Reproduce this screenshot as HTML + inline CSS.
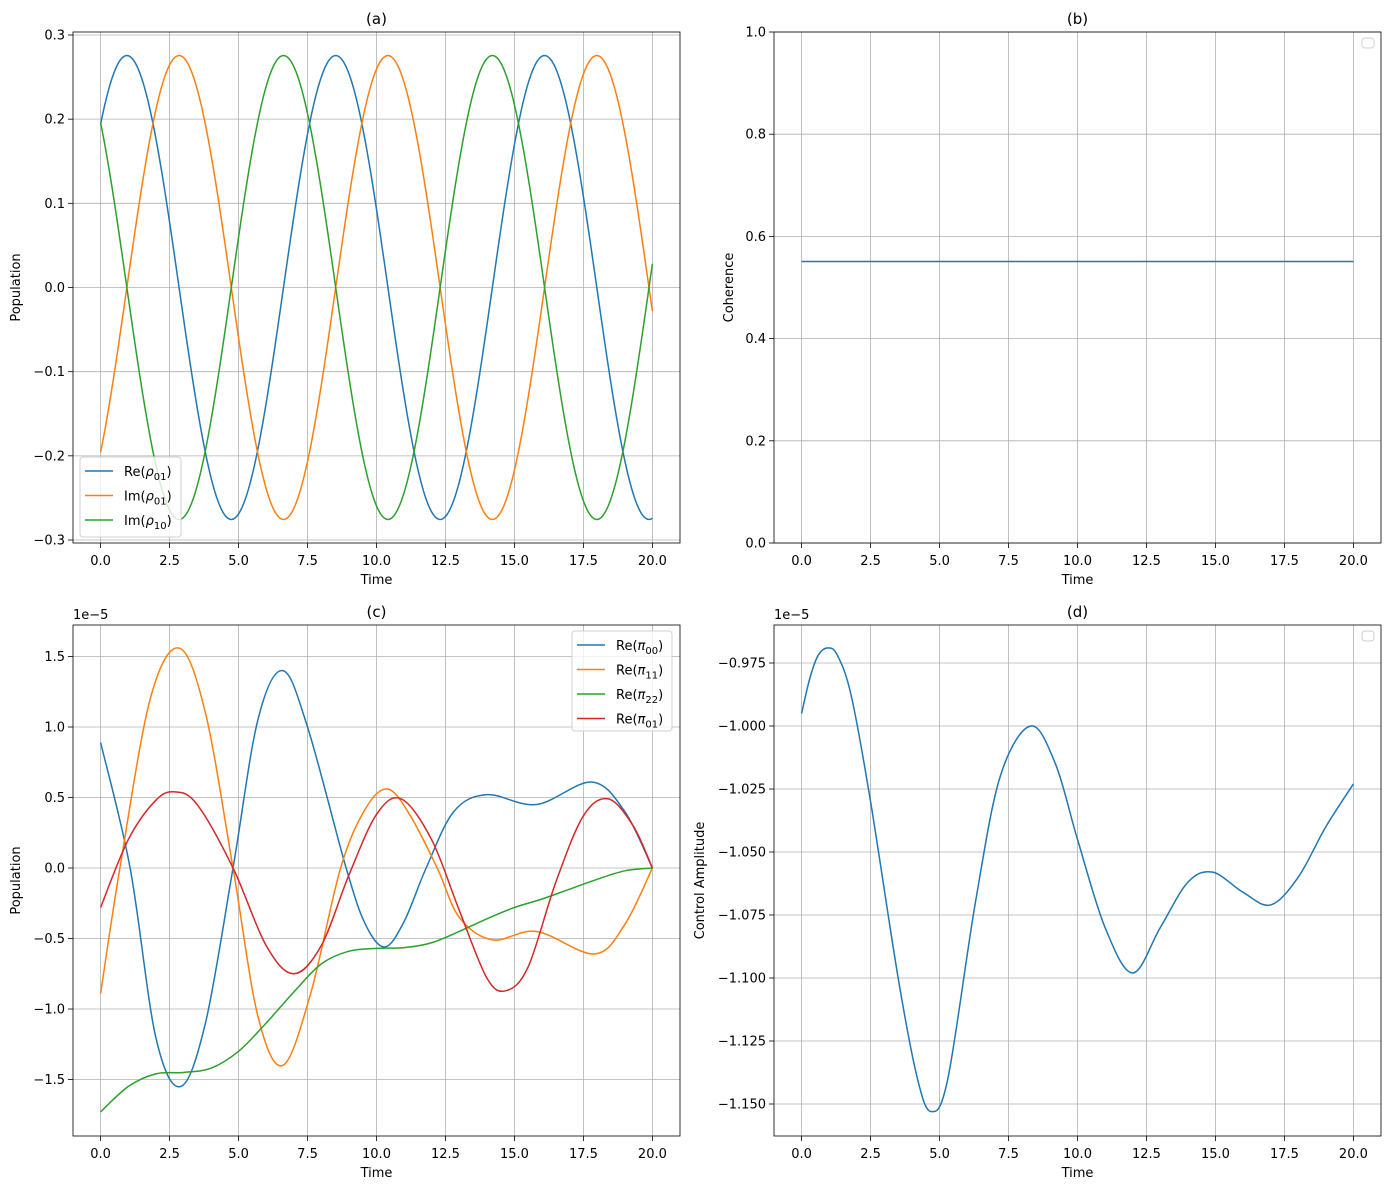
<!DOCTYPE html>
<html><head><meta charset="utf-8">
<style>
body{margin:0;background:#fff;}
svg{display:block;font-family:"DejaVu Sans","Liberation Sans",sans-serif;}
</style></head>
<body>
<svg id="s" width="1389" height="1189" xmlns="http://www.w3.org/2000/svg"></svg>
<script>
const S=document.getElementById('s');
let out='';
const C={b:'#1f77b4',o:'#ff7f0e',g:'#2ca02c',r:'#d62728'};
function crPath(pts,X,Y){
  let p=pts.map(q=>[X(q[0]),Y(q[1])]);
  let d='M'+p[0][0].toFixed(2)+','+p[0][1].toFixed(2);
  for(let i=0;i<p.length-1;i++){
    let p0=p[i-1]||p[i],p1=p[i],p2=p[i+1],p3=p[i+2]||p[i+1];
    let c1=[p1[0]+(p2[0]-p0[0])/6,p1[1]+(p2[1]-p0[1])/6];
    let c2=[p2[0]-(p3[0]-p1[0])/6,p2[1]-(p3[1]-p1[1])/6];
    d+='C'+c1.map(v=>v.toFixed(2)).join(',')+' '+c2.map(v=>v.toFixed(2)).join(',')+' '+p2.map(v=>v.toFixed(2)).join(',');
  }
  return d;
}
function linePath(pts,X,Y){return 'M'+pts.map(q=>X(q[0]).toFixed(2)+','+Y(q[1]).toFixed(2)).join('L');}
function axes(o){
  const X=t=>o.L+(t+1)*(o.R-o.L)/22;
  const Y=o.Y;
  let g='';
  for(let t=0;t<=20;t+=2.5){let x=X(t);g+=`<line x1="${x}" y1="${o.T}" x2="${x}" y2="${o.B}" stroke="#b0b0b0" stroke-width="0.8"/>`;}
  o.yt.forEach(v=>{let y=Y(v[0]);g+=`<line x1="${o.L}" y1="${y}" x2="${o.R}" y2="${y}" stroke="#b0b0b0" stroke-width="0.8"/>`;});
  g+=`<g clip-path="url(#c${o.id})">`;
  o.curves.forEach(c=>{g+=`<path d="${c.lin?linePath(c.p,X,Y):crPath(c.p,X,Y)}" fill="none" stroke="${c.c}" stroke-width="1.5"/>`;});
  g+='</g>';
  out+=`<clipPath id="c${o.id}"><rect x="${o.L}" y="${o.T}" width="${o.R-o.L}" height="${o.B-o.T}"/></clipPath>`;
  g+=`<rect x="${o.L}" y="${o.T}" width="${o.R-o.L}" height="${o.B-o.T}" fill="none" stroke="#000" stroke-width="0.8"/>`;
  for(let t=0;t<=20;t+=2.5){let x=X(t);g+=`<line x1="${x}" y1="${o.B}" x2="${x}" y2="${o.B+5}" stroke="#000" stroke-width="0.8"/><text x="${x}" y="${o.B+22}" font-size="13" text-anchor="middle">${t.toFixed(1)}</text>`;}
  o.yt.forEach(v=>{let y=Y(v[0]);g+=`<line x1="${o.L-5}" y1="${y}" x2="${o.L}" y2="${y}" stroke="#000" stroke-width="0.8"/><text x="${o.L-8}" y="${y+4.5}" font-size="13" text-anchor="end">${v[1]}</text>`;});
  g+=`<text x="${(o.L+o.R)/2}" y="${o.T-8}" font-size="15" text-anchor="middle">${o.title}</text>`;
  g+=`<text x="${(o.L+o.R)/2}" y="${o.B+41}" font-size="13" text-anchor="middle">Time</text>`;
  let yc=(o.T+o.B)/2;
  g+=`<text x="${o.ylx}" y="${yc}" font-size="13" text-anchor="middle" transform="rotate(-90 ${o.ylx} ${yc})">${o.ylabel}</text>`;
  if(o.off)g+=`<text x="${o.L}" y="${o.T-6}" font-size="13">1e−5</text>`;
  if(o.leg){
    let l=o.leg;
    g+=`<rect x="${l.x}" y="${l.y}" width="${l.w}" height="${l.h}" rx="3" fill="#fff" fill-opacity="0.8" stroke="#d0d0d0" stroke-width="1"/>`;
    (l.items||[]).forEach((it,i)=>{let y=l.y+14+i*24.5;
      g+=`<line x1="${l.x+5}" y1="${y}" x2="${l.x+33}" y2="${y}" stroke="${it[0]}" stroke-width="1.5"/><text x="${l.x+44}" y="${y+5}" font-size="13">${it[1]}</text>`;});
  }
  out+=g;
}
const A=0.2756,w=2*Math.PI/7.57,ph=0.79;
let re=[],im=[],im2=[];
for(let i=0;i<=400;i++){let t=i*0.05;re.push([t,A*Math.cos(w*t-ph)]);im.push([t,A*Math.sin(w*t-ph)]);im2.push([t,-A*Math.sin(w*t-ph)]);}
axes({id:'a',L:73,R:680,T:32,B:543,Y:v=>287.5-v*841.7,ylx:20,ylabel:'Population',title:'(a)',
 yt:[[0.3,'0.3'],[0.2,'0.2'],[0.1,'0.1'],[0,'0.0'],[-0.1,'−0.1'],[-0.2,'−0.2'],[-0.3,'−0.3']],
 curves:[{c:C.b,p:re,lin:1},{c:C.o,p:im,lin:1},{c:C.g,p:im2,lin:1}],
 leg:{x:80,y:457,w:101,h:80,items:[[C.b,'Re(<tspan font-style="italic">ρ</tspan><tspan font-size="10" dy="4">01</tspan><tspan dy="-4">)</tspan>'],[C.o,'Im(<tspan font-style="italic">ρ</tspan><tspan font-size="10" dy="4">01</tspan><tspan dy="-4">)</tspan>'],[C.g,'Im(<tspan font-style="italic">ρ</tspan><tspan font-size="10" dy="4">10</tspan><tspan dy="-4">)</tspan>']]}});
axes({id:'b',L:774,R:1381,T:32,B:543,Y:v=>543-v*511,ylx:733,ylabel:'Coherence',title:'(b)',
 yt:[[0,'0.0'],[0.2,'0.2'],[0.4,'0.4'],[0.6,'0.6'],[0.8,'0.8'],[1,'1.0']],
 curves:[{c:C.b,p:[[0,0.551],[20,0.551]],lin:1}],leg:{x:1362,y:38,w:12,h:10}});
const pi=n=>`Re(<tspan font-style="italic">π</tspan><tspan font-size="10" dy="4">${n}</tspan><tspan dy="-4">)</tspan>`;
axes({id:'c',L:73,R:680,T:625,B:1136,Y:v=>868-v*141,ylx:20,ylabel:'Population',title:'(c)',off:1,
 yt:[[1.5,'1.5'],[1,'1.0'],[0.5,'0.5'],[0,'0.0'],[-0.5,'−0.5'],[-1,'−1.0'],[-1.5,'−1.5']],
 curves:[
 {c:C.b,p:[[0,0.89],[1.07,0],[2,-1.2],[2.9,-1.55],[3.8,-1.1],[4.8,0],[5.7,1.05],[6.6,1.40],[7.5,1.0],[8.9,0],[9.6,-0.4],[10.3,-0.56],[11,-0.38],[11.8,0],[12.8,0.4],[14,0.52],[15.8,0.45],[17.8,0.61],[19,0.4],[20,0]]},
 {c:C.o,p:[[0,-0.89],[0.7,0],[1.8,1.2],[2.85,1.56],[3.8,1.1],[4.8,0],[5.7,-1.05],[6.6,-1.40],[7.6,-0.9],[8.7,0],[9.6,0.42],[10.4,0.56],[11.2,0.38],[12.2,0],[13,-0.35],[14.2,-0.51],[15.8,-0.45],[17.9,-0.61],[19,-0.4],[20,0]]},
 {c:C.g,p:[[0,-1.73],[1,-1.55],[2,-1.46],[3,-1.45],[4,-1.42],[5,-1.3],[6,-1.1],[7,-0.88],[8,-0.68],[9,-0.59],[10,-0.57],[11,-0.565],[12,-0.53],[13,-0.45],[14,-0.36],[15,-0.28],[16,-0.22],[17,-0.15],[18,-0.08],[19,-0.02],[20,0]]},
 {c:C.r,p:[[0,-0.28],[1,0.2],[2,0.48],[2.7,0.54],[3.5,0.45],[4.8,0],[6,-0.55],[7,-0.75],[8,-0.55],[9,-0.05],[10,0.38],[10.9,0.49],[12,0.2],[13,-0.3],[14,-0.78],[14.7,-0.87],[15.5,-0.7],[16.5,-0.1],[17.5,0.37],[18.4,0.49],[19.3,0.3],[20,0]]}],
 leg:{x:572,y:631,w:100,h:100,items:[[C.b,pi('00')],[C.o,pi('11')],[C.g,pi('22')],[C.r,pi('01')]]}});
axes({id:'d',L:774,R:1381,T:625,B:1136,Y:v=>663+(-0.975-v)*2520,ylx:704,ylabel:'Control Amplitude',title:'(d)',off:1,
 yt:[[-0.975,'−0.975'],[-1,'−1.000'],[-1.025,'−1.025'],[-1.05,'−1.050'],[-1.075,'−1.075'],[-1.1,'−1.100'],[-1.125,'−1.125'],[-1.15,'−1.150']],
 curves:[{c:C.b,p:[[0,-0.995],[0.3,-0.981],[0.6,-0.972],[0.95,-0.969],[1.3,-0.972],[1.8,-0.988],[2.5,-1.03],[3.5,-1.10],[4.2,-1.14],[4.7,-1.153],[5.3,-1.14],[6.3,-1.07],[7.2,-1.02],[8.3,-1.0],[9.2,-1.015],[10,-1.045],[11,-1.08],[12,-1.098],[13,-1.08],[14,-1.062],[14.9,-1.058],[16,-1.066],[17,-1.071],[18,-1.06],[19,-1.04],[20,-1.023]]}],
 leg:{x:1362,y:631,w:12,h:10}});
S.innerHTML=out;
</script>
</body></html>
